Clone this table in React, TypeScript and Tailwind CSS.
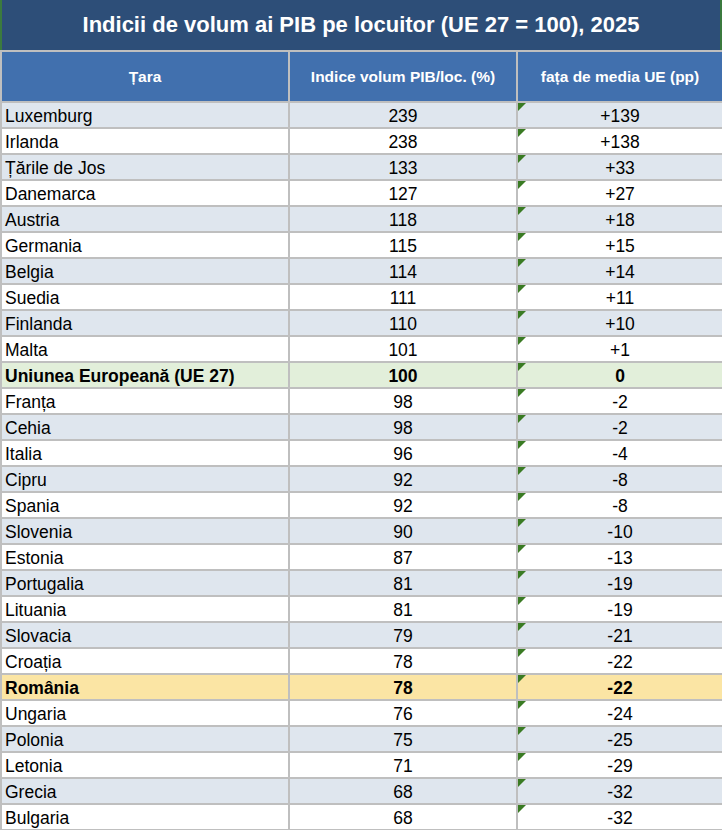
const rows: [string, string, string][] = [
  ["Luxemburg", "239", "+139"],
  ["Irlanda", "238", "+138"],
  ["Țările de Jos", "133", "+33"],
  ["Danemarca", "127", "+27"],
  ["Austria", "118", "+18"],
  ["Germania", "115", "+15"],
  ["Belgia", "114", "+14"],
  ["Suedia", "111", "+11"],
  ["Finlanda", "110", "+10"],
  ["Malta", "101", "+1"],
  ["Uniunea Europeană (UE 27)", "100", "0"],
  ["Franța", "98", "-2"],
  ["Cehia", "98", "-2"],
  ["Italia", "96", "-4"],
  ["Cipru", "92", "-8"],
  ["Spania", "92", "-8"],
  ["Slovenia", "90", "-10"],
  ["Estonia", "87", "-13"],
  ["Portugalia", "81", "-19"],
  ["Lituania", "81", "-19"],
  ["Slovacia", "79", "-21"],
  ["Croația", "78", "-22"],
  ["România", "78", "-22"],
  ["Ungaria", "76", "-24"],
  ["Polonia", "75", "-25"],
  ["Letonia", "71", "-29"],
  ["Grecia", "68", "-32"],
  ["Bulgaria", "68", "-32"],
];

function rowBg(name: string, i: number) {
  if (name.startsWith("Uniunea")) return "bg-[#e2efda] font-bold";
  if (name === "România") return "bg-[#fbe5a4] font-bold";
  return i % 2 === 0 ? "bg-[#dfe6ee]" : "bg-white";
}

function Flag() {
  return (
    <svg className="absolute left-0 top-0" width="8" height="8" viewBox="0 0 8 8">
      <polygon points="0,0 8,0 0,8" fill="#3a7b23" />
    </svg>
  );
}

export default function App() {
  return (
    <div className="w-[722px] h-[830px] overflow-hidden bg-[#bfbfbf] font-['Liberation_Sans',Arial,sans-serif] text-black">
      <div className="h-[50px] bg-[#2d4e78] border-x-2 border-[#3b7a3f] flex items-center justify-center text-white font-bold text-[22px] leading-none">
        Indicii de volum ai PIB pe locuitor (UE 27 = 100), 2025
      </div>
      <div className="grid grid-cols-[286px_226px_1fr] gap-[2px] pl-[2px] pt-[2px]">
        <div className="h-[49px] bg-[#4170ae] flex items-center justify-center text-white font-bold text-[15.5px] leading-none">
          Țara
        </div>
        <div className="h-[49px] bg-[#4170ae] flex items-center justify-center text-white font-bold text-[15.5px] leading-none">
          Indice volum PIB/loc. (%)
        </div>
        <div className="h-[49px] bg-[#4170ae] flex items-center justify-center text-white font-bold text-[15.5px] leading-none">
          fața de media UE (pp)
        </div>
        {rows.map(([name, idx, diff], i) => {
          const bg = rowBg(name, i);
          return [
            <div key={name + "a"} className={`h-[24px] ${bg} flex items-center pl-[3px] pt-[3px] text-[17.5px] leading-none`}>
              {name}
            </div>,
            <div key={name + "b"} className={`h-[24px] ${bg} flex items-center justify-center pt-[3px] text-[17.5px] leading-none`}>
              {idx}
            </div>,
            <div key={name + "c"} className={`relative h-[24px] ${bg} flex items-center justify-center pt-[3px] text-[17.5px] leading-none`}>
              <Flag />
              {diff}
            </div>,
          ];
        })}
      </div>
    </div>
  );
}
